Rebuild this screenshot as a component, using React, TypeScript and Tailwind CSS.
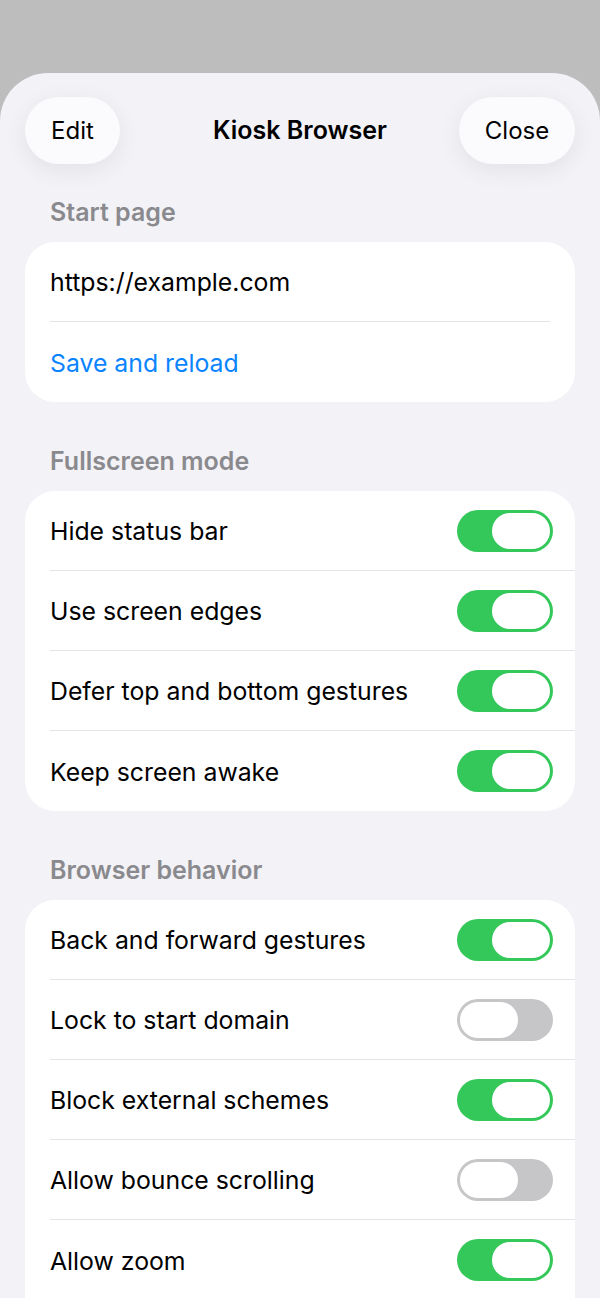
const font = { fontFamily: '"Inter", "Noto Sans", sans-serif' }

function Toggle({ on }: { on: boolean }) {
  return (
    <div
      className={
        on
          ? "flex h-[42px] w-[96px] shrink-0 items-center justify-end rounded-full bg-[#34c759] p-[3px]"
          : "flex h-[42px] w-[96px] shrink-0 items-center justify-start rounded-full bg-[#c6c6c8] p-[3px]"
      }
    >
      <div className="h-[36px] w-[58px] rounded-full bg-white" />
    </div>
  )
}

function Row({ label, on, last }: { label: string; on: boolean; last?: boolean }) {
  return (
    <div className="pl-[25px]">
      <div className={last ? "flex h-[80px] items-center justify-between pr-[22px]" : "flex h-[80px] items-center justify-between border-b border-[#e3e3e8] pr-[22px]"}>
        <span className="pt-[3px] text-[24.8px] text-black">{label}</span>
        <Toggle on={on} />
      </div>
    </div>
  )
}

function Section({ title, children, first }: { title: string; children: React.ReactNode; first?: boolean }) {
  return (
    <div className={first ? "mt-[33px]" : "mt-[44px]"}>
      <div className="h-[30px] px-[25px] text-[25px] font-semibold leading-[30px] text-[#8a8a8e]">{title}</div>
      <div className="mt-[15px] overflow-hidden rounded-[30px] bg-white">{children}</div>
    </div>
  )
}

export default function App() {
  return (
    <div className="h-[1298px] w-[600px] overflow-hidden bg-[#bdbdbd] pt-[73px]" style={font}>
      <div className="min-h-[1225px] rounded-t-[48px] bg-[#f2f2f7] px-[25px] pt-[24px]">
        <div className="grid grid-cols-[1fr_auto_1fr] items-center">
          <div className="flex justify-start">
            <button className="h-[67px] w-[95px] rounded-full bg-[#fbfbfd] text-[24px] text-black shadow-[0_6px_24px_rgba(0,0,0,0.07)]">Edit</button>
          </div>
          <div className="text-[25px] font-semibold text-black">Kiosk Browser</div>
          <div className="flex justify-end">
            <button className="h-[67px] w-[116px] rounded-full bg-[#fbfbfd] text-[24px] text-black shadow-[0_6px_24px_rgba(0,0,0,0.07)]">Close</button>
          </div>
        </div>

        <Section title="Start page" first>
          <div className="px-[25px]">
            <div className="flex h-[80px] items-center border-b border-[#e3e3e8] pt-[3px] text-[24.8px] text-black">https://example.com</div>
          </div>
          <div className="flex h-[80px] items-center px-[25px] pt-[3px] text-[24.8px] text-[#0a84ff]">Save and reload</div>
        </Section>

        <Section title="Fullscreen mode">
          <Row label="Hide status bar" on />
          <Row label="Use screen edges" on />
          <Row label="Defer top and bottom gestures" on />
          <Row label="Keep screen awake" on last />
        </Section>

        <Section title="Browser behavior">
          <Row label="Back and forward gestures" on />
          <Row label="Lock to start domain" on={false} />
          <Row label="Block external schemes" on />
          <Row label="Allow bounce scrolling" on={false} />
          <Row label="Allow zoom" on last />
          <div className="h-[60px]" />
        </Section>
      </div>
    </div>
  )
}
